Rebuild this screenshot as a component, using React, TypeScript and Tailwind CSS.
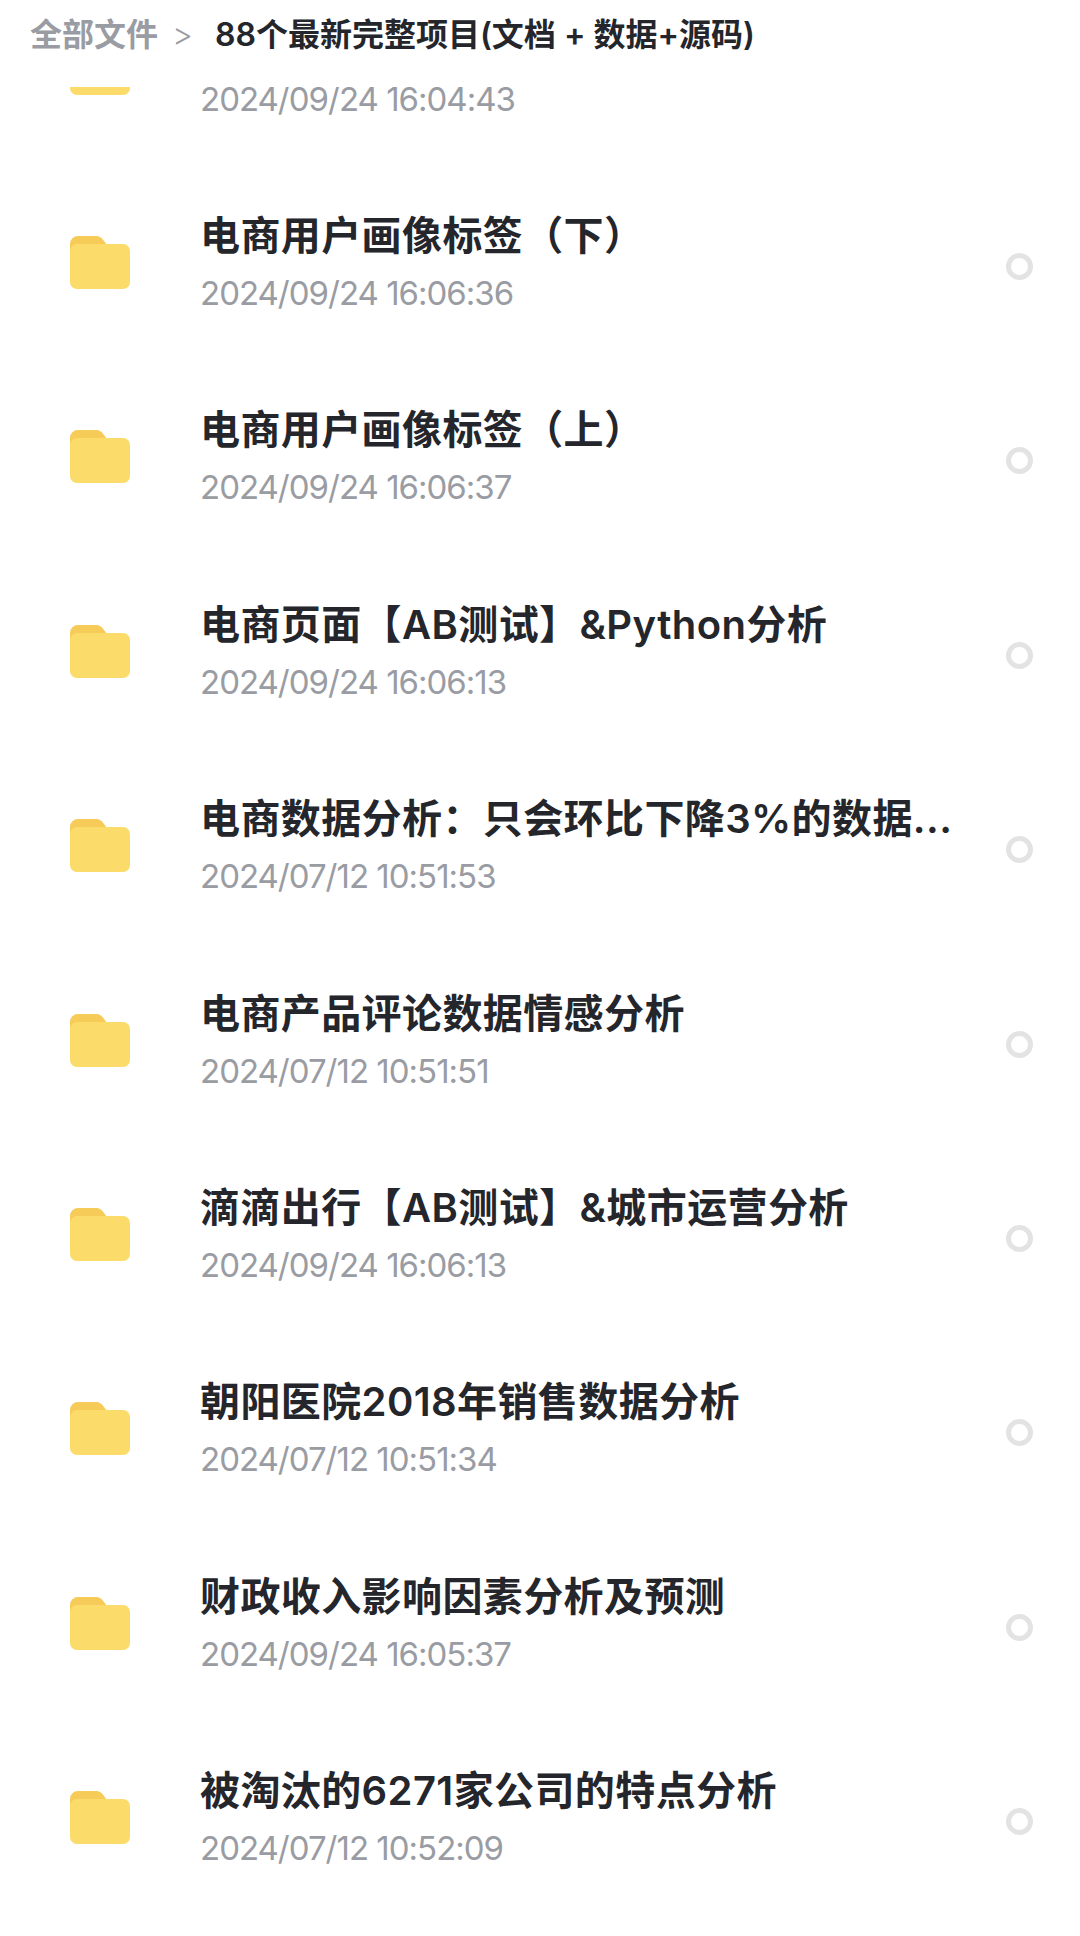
import React from "react";

type FileItem = { name: string; date: string };

// the first row is scrolled under the header, only its date still shows
const files: FileItem[] = [
  { name: "", date: "2024/09/24 16:04:43" },
  { name: "电商用户画像标签（下）", date: "2024/09/24 16:06:36" },
  { name: "电商用户画像标签（上）", date: "2024/09/24 16:06:37" },
  { name: "电商页面【AB测试】&Python分析", date: "2024/09/24 16:06:13" },
  { name: "电商数据分析：只会环比下降3%的数据...", date: "2024/07/12 10:51:53" },
  { name: "电商产品评论数据情感分析", date: "2024/07/12 10:51:51" },
  { name: "滴滴出行【AB测试】&城市运营分析", date: "2024/09/24 16:06:13" },
  { name: "朝阳医院2018年销售数据分析", date: "2024/07/12 10:51:34" },
  { name: "财政收入影响因素分析及预测", date: "2024/09/24 16:05:37" },
  { name: "被淘汰的6271家公司的特点分析", date: "2024/07/12 10:52:09" },
];

const FolderIcon: React.FC = () => (
  <svg width="60" height="53" viewBox="0 0 60 53" className="shrink-0">
    <path d="M0 8a8 8 0 0 1 8-8h17c5 0 7 2 9 5l3 4v12H0z" fill="#f6cb58" />
    <rect x="0" y="8" width="60" height="45" rx="7" fill="#fbdb6a" />
  </svg>
);

const FileRow: React.FC<{ file: FileItem }> = ({ file }) => (
  <div className="flex h-[194.4px] items-center pl-[70px] pr-[47px]">
    <FolderIcon />
    <div className="ml-[71px] min-w-0 flex-1 -translate-x-[1px]">
      <div className="mt-[1px] h-[46px] whitespace-nowrap text-[40px] leading-[46px] font-semibold tracking-[0.4px] text-[#24262b]">
        {file.name}
      </div>
      <div className="mt-[14px] whitespace-nowrap text-[33px] leading-[40px] tracking-[-1px] text-[#9a9ca3]">
        {file.date}
      </div>
    </div>
    <div className="mt-[8px] h-[27px] w-[27px] shrink-0 rounded-full border-[5px] border-[#e3e3e3]" />
  </div>
);

export default function App() {
  return (
    <div className="h-[1936px] w-[1080px] overflow-hidden bg-white font-['Inter','Noto_Sans_CJK_SC',sans-serif]">
      <div className="flex h-[87px] items-start bg-white pl-[30px] pt-[15px]">
        <span className="text-[32px] leading-[40px] font-semibold text-[#9a9ca3]">全部文件</span>
        <span className="ml-[14px] text-[32px] leading-[40px] font-light text-[#9a9ca3]">&gt;</span>
        <span className="ml-[22px] text-[32px] leading-[40px] font-semibold text-[#24262b]">
          88个最新完整项目(文档 + 数据+源码)
        </span>
      </div>
      <div className="h-[1849px] overflow-hidden">
        <div className="-mt-[116px]">
          {files.map((file, i) => (
            <FileRow key={i} file={file} />
          ))}
        </div>
      </div>
    </div>
  );
}
